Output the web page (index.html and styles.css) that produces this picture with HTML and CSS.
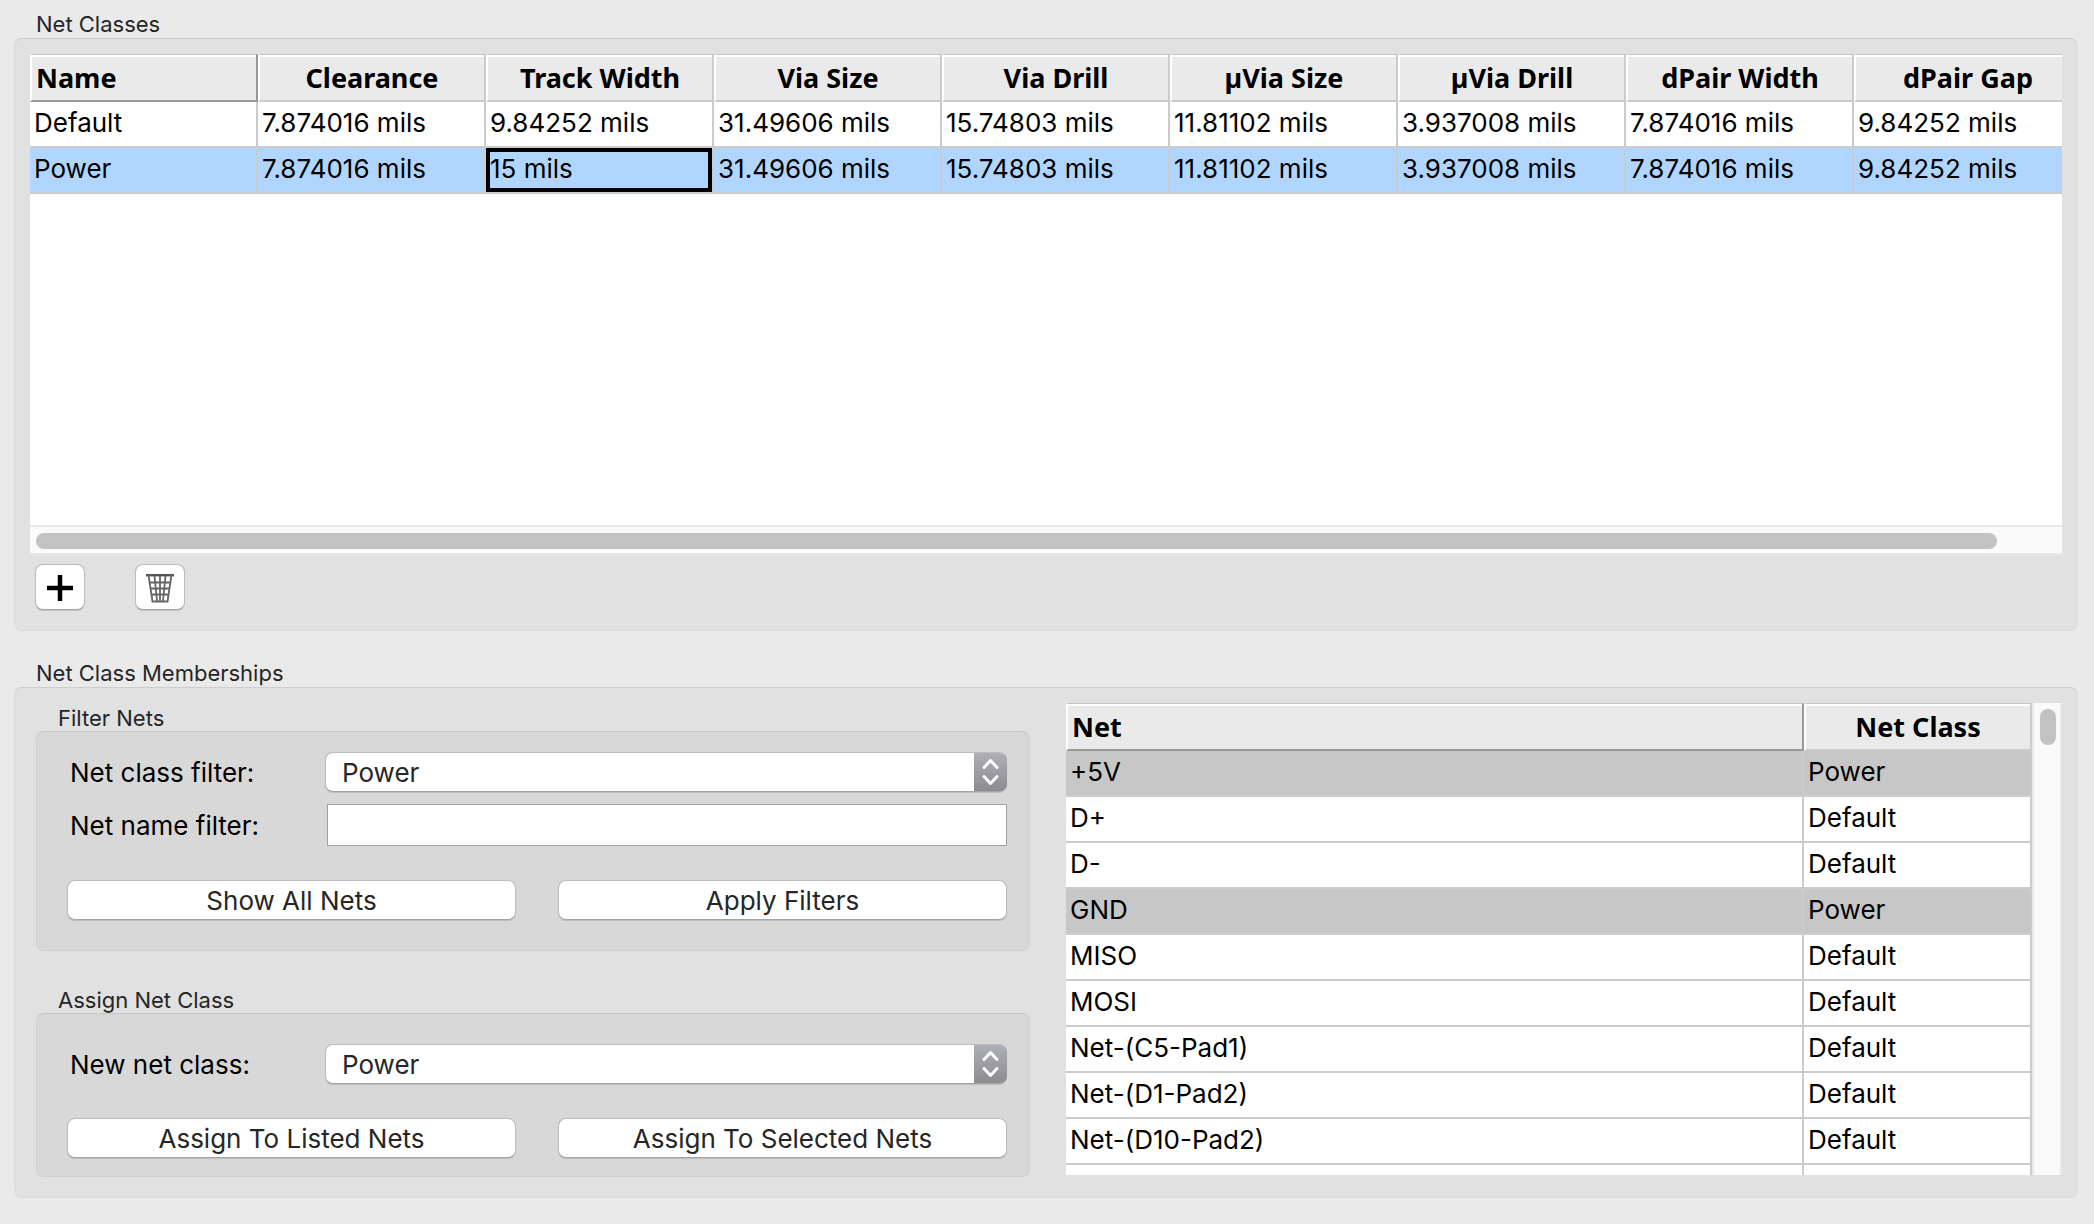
FILE: index.html
```html
<!DOCTYPE html>
<html lang="en">
<head>
<meta charset="utf-8">
<title>Net Classes</title>
<link rel="stylesheet" href="styles.css">
</head>
<body>
<section class="section section-grow">
  <h2 class="caption">Net Classes</h2>
  <div class="panel classes-panel">
    <div class="grid-view">
      <table class="grid classes-grid">
        <thead>
          <tr><th class="current">Name</th><th>Clearance</th><th>Track Width</th><th>Via Size</th><th>Via Drill</th><th>µVia Size</th><th>µVia Drill</th><th>dPair Width</th><th>dPair Gap</th></tr>
        </thead>
        <tbody>
          <tr><td>Default</td><td>7.874016 mils</td><td>9.84252 mils</td><td>31.49606 mils</td><td>15.74803 mils</td><td>11.81102 mils</td><td>3.937008 mils</td><td>7.874016 mils</td><td>9.84252 mils</td></tr>
          <tr class="selected"><td>Power</td><td>7.874016 mils</td><td class="cursor">15 mils</td><td>31.49606 mils</td><td>15.74803 mils</td><td>11.81102 mils</td><td>3.937008 mils</td><td>7.874016 mils</td><td>9.84252 mils</td></tr>
        </tbody>
      </table>
    </div>
    <div class="scroll-x"><div class="thumb-x"></div></div>
    <div class="toolbar">
      <button class="button icon-button" type="button" aria-label="Add net class">
        <svg width="26" height="26" viewBox="0 0 26 26"><path d="M13 0v26M0 13h26" stroke="#000" stroke-width="4.500"/></svg>
      </button>
      <button class="button icon-button" type="button" aria-label="Delete net class">
        <svg width="28" height="30" viewBox="0 0 28 30" fill="none" stroke="#666" stroke-width="1.800"><path d="M0 2.200h28" stroke="#555" stroke-width="2.400"/><path d="M2.500 2l4 26.500h15l4-26.500M8.500 3l2.500 25M14 3v25M19.500 3l-2.500 25M3 9.500h22M4.500 15.500h19M5.500 21.500h17"/></svg>
      </button>
    </div>
  </div>
</section>

<section class="section">
  <h2 class="caption">Net Class Memberships</h2>
  <div class="panel members-panel">
    <div class="forms">
      <h3 class="caption">Filter Nets</h3>
      <form class="panel inner filter-form">
        <div class="fields">
          <label for="class-filter">Net class filter:</label>
          <div class="select-box">
            <select id="class-filter"><option>Power</option></select>
            <svg class="arrows" width="33" height="38" viewBox="0 0 33 38"><path d="M10 14.500l6.500-7 6.500 7M10 23.500l6.500 7 6.500-7"/></svg>
          </div>
          <label for="name-filter">Net name filter:</label>
          <input id="name-filter" class="text-box" type="text">
        </div>
        <div class="actions">
          <button class="button" type="button">Show All Nets</button>
          <button class="button" type="button">Apply Filters</button>
        </div>
      </form>
      <h3 class="caption">Assign Net Class</h3>
      <form class="panel inner assign-form">
        <div class="fields">
          <label for="new-class">New net class:</label>
          <div class="select-box">
            <select id="new-class"><option>Power</option></select>
            <svg class="arrows" width="33" height="38" viewBox="0 0 33 38"><path d="M10 14.500l6.500-7 6.500 7M10 23.500l6.500 7 6.500-7"/></svg>
          </div>
        </div>
        <div class="actions">
          <button class="button" type="button">Assign To Listed Nets</button>
          <button class="button" type="button">Assign To Selected Nets</button>
        </div>
      </form>
    </div>
    <div class="nets">
      <div class="nets-view">
        <table class="grid nets-grid">
          <thead><tr><th class="current">Net</th><th class="class-col">Net Class</th></tr></thead>
          <tbody>
            <tr class="marked"><td>+5V</td><td>Power</td></tr>
            <tr><td>D+</td><td>Default</td></tr>
            <tr><td>D-</td><td>Default</td></tr>
            <tr class="marked"><td>GND</td><td>Power</td></tr>
            <tr><td>MISO</td><td>Default</td></tr>
            <tr><td>MOSI</td><td>Default</td></tr>
            <tr><td>Net-(C5-Pad1)</td><td>Default</td></tr>
            <tr><td>Net-(D1-Pad2)</td><td>Default</td></tr>
            <tr><td>Net-(D10-Pad2)</td><td>Default</td></tr>
            <tr><td></td><td></td></tr>
          </tbody>
        </table>
        <div class="scroll-y"><div class="thumb-y"></div></div>
      </div>
    </div>
  </div>
</section>
</body>
</html>
```

FILE: styles.css
```css
* { box-sizing: border-box; }

body {
  margin: 0;
  min-height: 100vh;
  padding: 8px 16px 26px 14px;
  display: flex;
  flex-direction: column;
  gap: 26px;
  background: #eaeaea;
  color: #000;
  font: 26px/30px Inter, "Liberation Sans", sans-serif;
}

.section { display: flex; flex-direction: column; }
.section-grow { flex: 1; }

.caption {
  margin: 0;
  padding: 2px 0 0 22px;
  font-size: 22px;
  font-weight: 400;
  line-height: 28px;
  color: #262626;
}

.panel {
  border: 1px solid #dadada;
  border-top-color: #cdcdcd;
  border-radius: 8px;
  background: #e1e1e1;
}

.classes-panel {
  flex: 1;
  display: flex;
  flex-direction: column;
  padding: 15px 15px 20px;
}

.grid-view {
  flex: 1;
  min-height: 200px;
  overflow: hidden;
  background: #fff;
}

/* data grids */
.grid {
  border-collapse: separate;
  border-spacing: 0;
  table-layout: fixed;
}
.classes-grid { width: 2052px; }
.nets-grid { flex: 1; align-self: flex-start; width: 0; background: #fff; }
.class-col { width: 228px; }

.grid thead th {
  height: 48px;
  padding: 0;
  border: 2px solid #fff;
  border-top: 1px solid #c4c4c4;
  border-right-color: #ccc;
  border-bottom-color: #ccc;
  background: #eaeaea;
  box-shadow: inset 0 2px #fff;
  font: 700 27px/30px "Noto Sans", "Open Sans", sans-serif;
}
.grid thead th.current {
  padding-left: 4px;
  border-right-color: #999;
  border-bottom-color: #999;
  text-align: left;
}
.grid td {
  height: 46px;
  padding: 0 0 2px 4px;
  border-right: 2px solid #ccc;
  border-bottom: 2px solid #ccc;
  white-space: nowrap;
}
.selected td { background: #b0d6ff; }
.selected .cursor { box-shadow: inset 0 0 0 4px #000; }
.marked td { background: #c7c7c7; }

/* scroll bars */
.scroll-x {
  height: 30px;
  padding: 6px 65px 0 6px;
  border: solid #e8e8e8;
  border-width: 2px 0;
  background: #fafafa;
}
.thumb-x { height: 16px; border-radius: 8px; background: #c2c2c2; }
.scroll-y {
  width: 30px;
  padding: 6px;
  border: solid #e8e8e8;
  border-width: 0 2px;
  background: #fafafa;
}
.thumb-y { width: 16px; height: 36px; border-radius: 8px; background: #c2c2c2; }

/* controls */
.button {
  height: 40px;
  padding: 1px 0 0;
  border: 1px solid #bcbcbc;
  border-bottom-color: #a4a4a4;
  border-radius: 8px;
  background: #fff;
  box-shadow: 0 1px 1px #0002;
  font: inherit;
  color: #262626;
}
.toolbar { display: flex; gap: 50px; padding: 9px 5px 0; }
.icon-button {
  display: flex;
  align-items: center;
  justify-content: center;
  width: 50px;
  height: 46px;
}

.members-panel {
  display: grid;
  grid-template-columns: minmax(0, 994px) minmax(0, 1fr);
  gap: 36px;
  padding: 15px 15px 20px 21px;
}
.forms .caption { line-height: 26px; }
.inner { background: #d8d8d8; border-color: #d0d0d0; border-top-color: #c6c6c6; }
.filter-form { margin-bottom: 34px; padding: 20px 22px 30px 30px; }
.assign-form { padding: 30px 22px 18px 30px; }

.fields {
  display: grid;
  grid-template-columns: 255px minmax(0, 1fr);
  row-gap: 12px;
  align-items: center;
  padding-left: 3px;
}
.fields label { padding-top: 2px; }
.select-box { position: relative; height: 40px; }
select {
  appearance: none;
  width: 100%;
  height: 40px;
  padding: 2px 40px 0 16px;
  border: 1px solid #bcbcbc;
  border-bottom-color: #a4a4a4;
  border-radius: 8px;
  background: #fff;
  box-shadow: 0 1px 1px #0002;
  font: inherit;
  color: #262626;
}
.arrows {
  position: absolute;
  top: 1px;
  right: 0;
  border-radius: 0 7px 7px 0;
  background: linear-gradient(#aeb0b6, #8c8b90);
  fill: none;
  stroke: #fff;
  stroke-width: 3;
  stroke-linecap: round;
  stroke-linejoin: round;
  pointer-events: none;
}
.text-box {
  height: 42px;
  margin-left: 2px;
  padding: 0 8px;
  border: 1px solid #a0a0a0;
  background: #fff;
  font: inherit;
}
.actions {
  display: grid;
  grid-template-columns: 1fr 1fr;
  gap: 42px;
  padding-top: 34px;
}

.nets { display: flex; flex-direction: column; padding-bottom: 2px; }
.nets-view { display: flex; flex: 1 1 0; min-height: 0; overflow: hidden; }
```
